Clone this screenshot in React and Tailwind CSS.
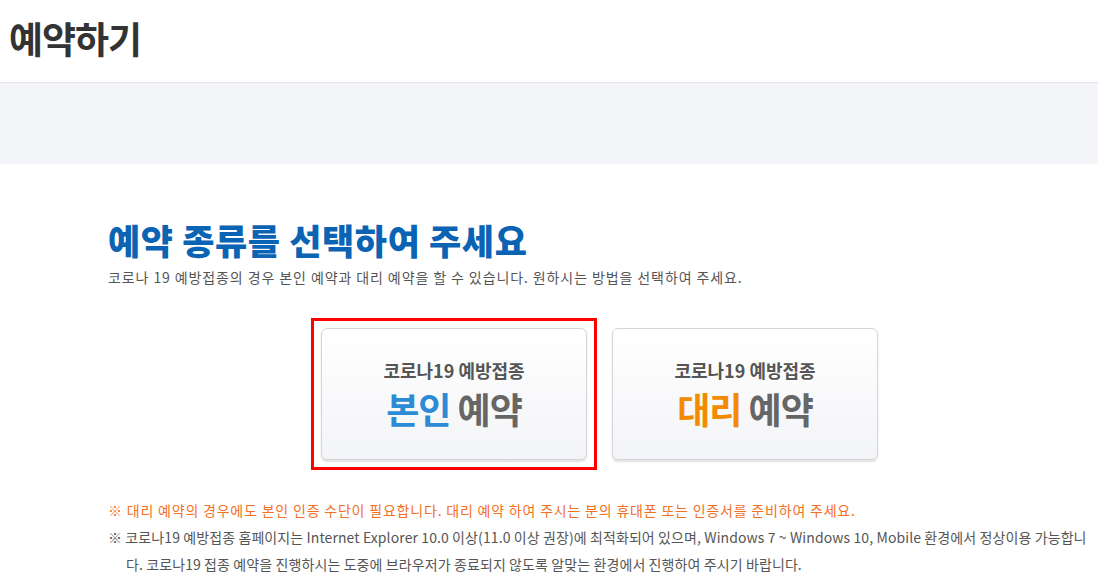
import React from "react";

const font = { fontFamily: '"Noto Sans CJK KR", "Noto Sans", sans-serif' };

const Card = ({ accent, accentClass, selected }) => (
  <button
    type="button"
    className={
      "relative w-[266px] h-[132px] rounded-[6px] border border-[#d4d6da] bg-gradient-to-b from-white to-[#f3f4f7] shadow-[0_2px_2px_rgba(0,0,0,0.12)] flex flex-col items-center pt-[29px] " +
      (selected
        ? "before:content-[''] before:absolute before:-inset-[11px] before:border-3 before:border-[#ff0000]"
        : "")
    }
  >
    <span className="text-[18px] leading-[24px] font-bold text-[#555] tracking-[0px]">
      코로나19 예방접종
    </span>
    <span className="mt-[6px] text-[36px] leading-[40px] font-bold tracking-[-1px] text-[#666]">
      <span className={accentClass}>{accent}</span> 예약
    </span>
  </button>
);

const App = () => {
  return (
    <div className="w-[1098px] min-h-[586px] bg-white overflow-hidden" style={font}>
      <header className="h-[83px] px-[9px] flex items-center border-b border-[#e3e5ea]">
        <h1 className="text-[37px] leading-[44px] font-bold text-[#333] tracking-[-1px] -mt-[6px]">
          예약하기
        </h1>
      </header>
      <div className="h-[81px] bg-[#f4f5f8]" />

      <main className="pl-[108px] pt-[54px]">
        <h2 className="text-[35px] leading-[44px] font-extrabold text-[#0a63b3] tracking-[0.6px]">
          예약 종류를 선택하여 주세요
        </h2>
        <p className="mt-[5px] text-[14px] leading-[20px] text-[#555] tracking-[0.9px]">
          코로나 19 예방접종의 경우 본인 예약과 대리 예약을 할 수 있습니다. 원하시는 방법을 선택하여 주세요.
        </p>

        <div className="mt-[41px] ml-[213px] flex gap-[25px]">
          <Card accent="본인" accentClass="text-[#2d8ad4]" selected />
          <Card accent="대리" accentClass="text-[#f28b00]" />
        </div>

        <div className="mt-[37px] w-[984px] text-[14px] leading-[27px]">
          <p className="pl-[18px] -indent-[18px] text-[#f3701f] tracking-[0.8px]">
            ※ 대리 예약의 경우에도 본인 인증 수단이 필요합니다. 대리 예약 하여 주시는 분의 휴대폰 또는 인증서를 준비하여 주세요.
          </p>
          <p className="pl-[18px] -indent-[18px] text-[#555] break-all tracking-[0.1px]">
            ※ 코로나19 예방접종 홈페이지는 Internet Explorer 10.0 이상(11.0 이상 권장)에 최적화되어 있으며, Windows 7 ~ Windows 10, Mobile 환경에서 정상이용 가능합니다. 코로나19 접종 예약을 진행하시는 도중에 브라우저가 종료되지 않도록 알맞는 환경에서 진행하여 주시기 바랍니다.
          </p>
        </div>
      </main>
    </div>
  );
};

export default App;
